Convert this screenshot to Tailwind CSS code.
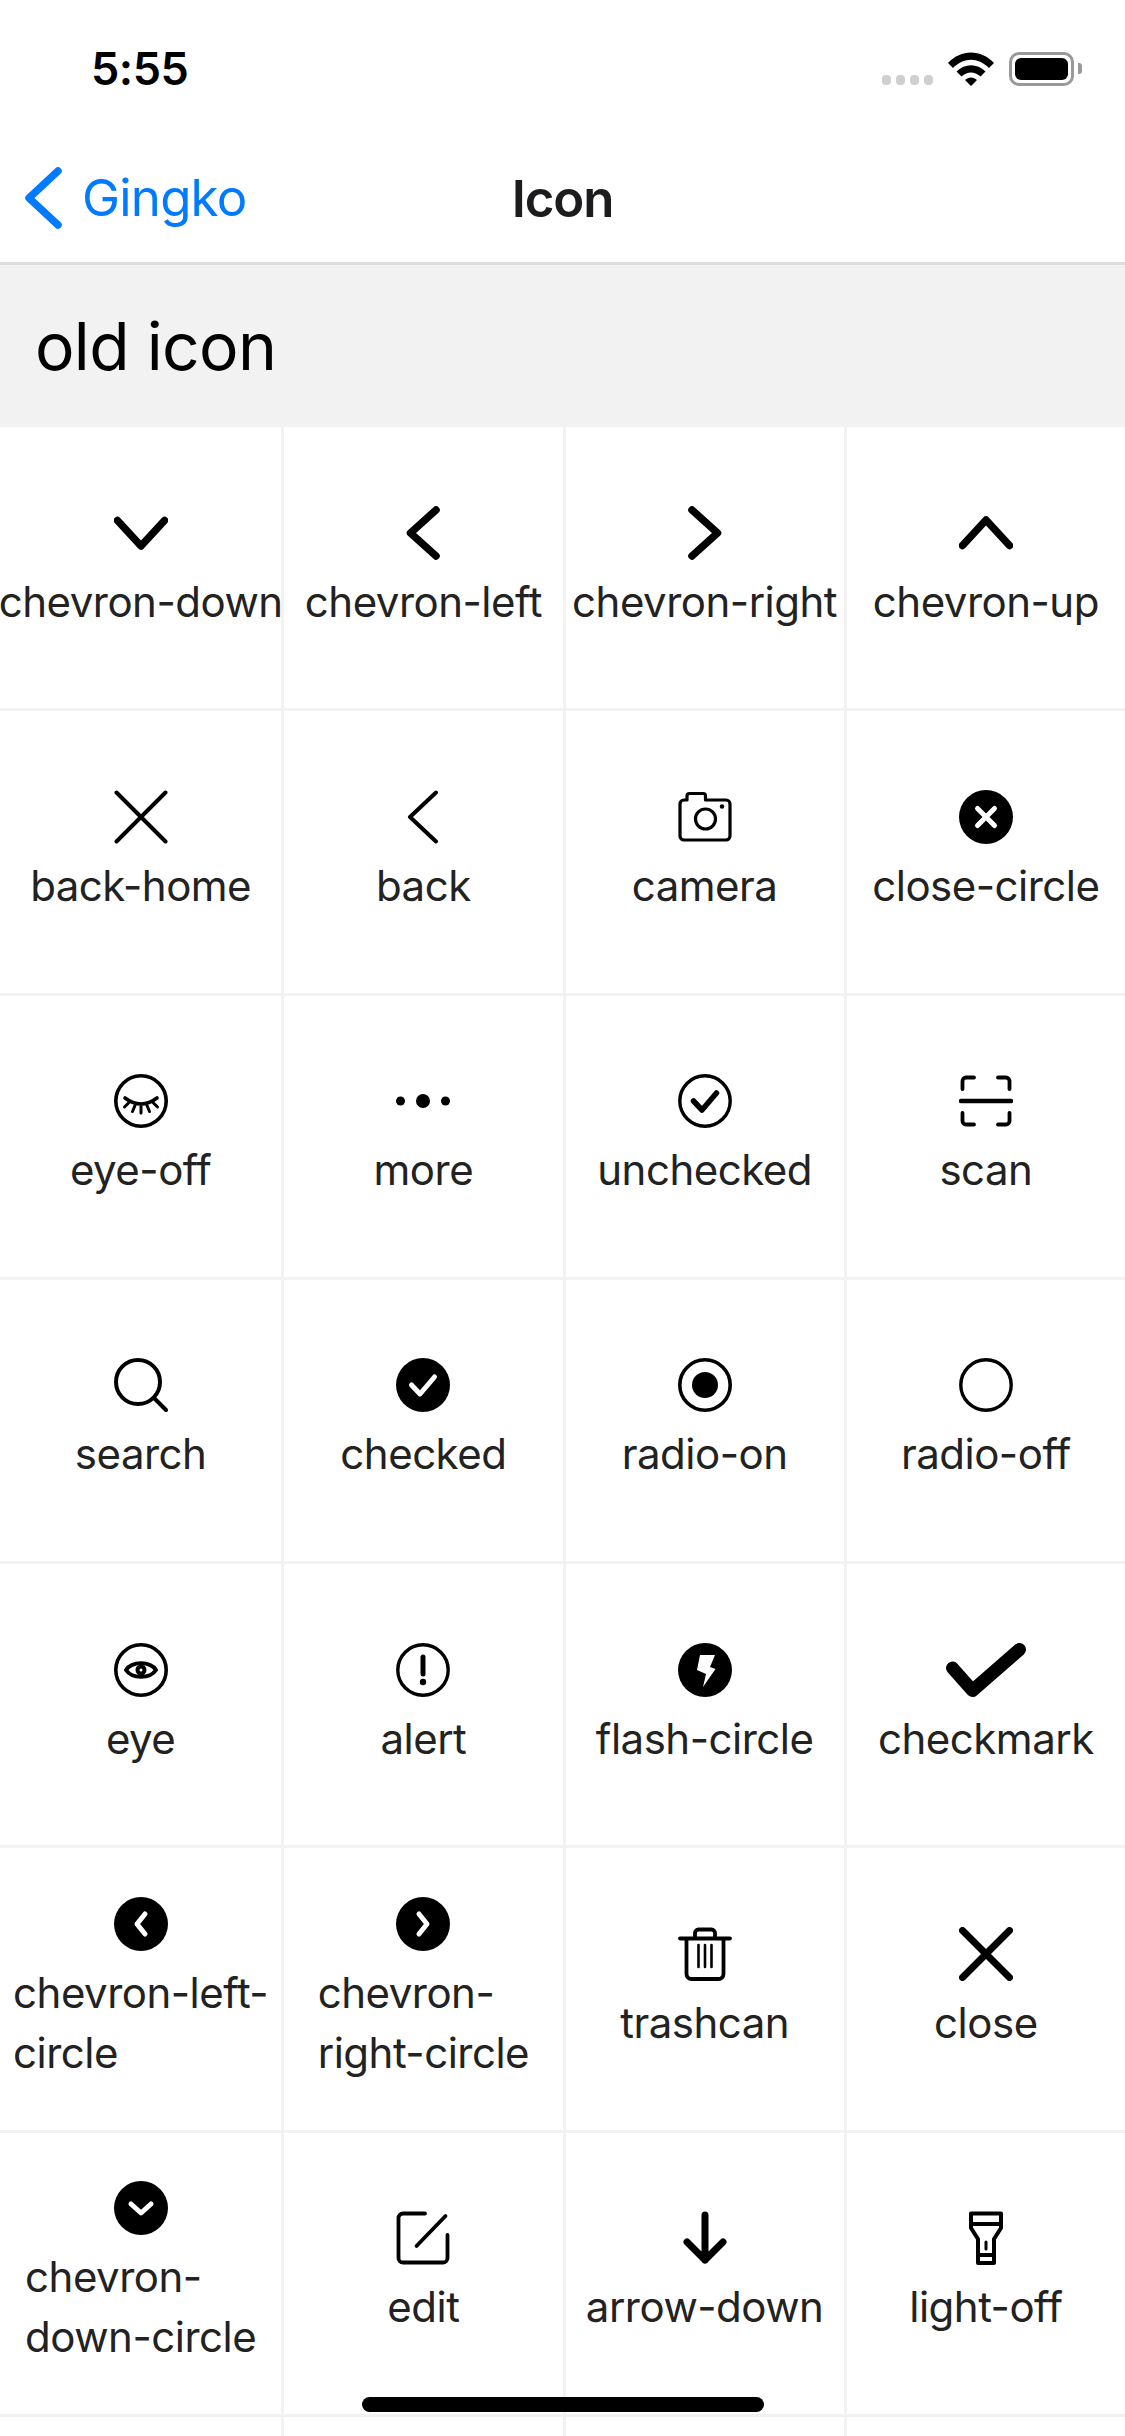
<!DOCTYPE html>
<html lang="en">
<head>
    <meta charset="UTF-8">
    <meta name="viewport" content="width=device-width, initial-scale=1.0">
    <title>Icon</title>
    <script src="https://cdn.jsdelivr.net/npm/@tailwindcss/browser@4"></script>
</head>
<body class="bg-white font-[Inter,sans-serif]">
<div class="relative w-[1125px] h-[2436px] overflow-hidden bg-white">
    <!-- Status bar -->
    <div class="flex items-center justify-between h-[132px] pl-[91px] pr-[43px]">
        <span class="text-[45px] leading-[54px] font-semibold tracking-[-0.5px] text-black mt-[5px]">5:55</span>
        <div class="flex items-center">
            <div class="flex gap-[5px] mt-[28px] mr-[15px]">
                <div class="w-[9px] h-[10px] rounded-[4px] bg-[#cfcfcf]"></div>
                <div class="w-[9px] h-[10px] rounded-[4px] bg-[#cfcfcf]"></div>
                <div class="w-[9px] h-[10px] rounded-[4px] bg-[#cfcfcf]"></div>
                <div class="w-[9px] h-[10px] rounded-[4px] bg-[#cfcfcf]"></div>
            </div>
            <svg class="mt-[5px] mr-[15px]" width="46" height="34" viewBox="0 0 46 34"><path d="M0 11 C13 -3 33 -3 46 11 L41 16 C30 5 16 5 5 16 Z M8.5 19.5 C17 11 29 11 37.5 19.5 L32.5 24.5 C26 19 20 19 13.5 24.5 Z M17 28 C20.5 24.5 25.5 24.5 29 28 L23 34 Z" fill="#000"/></svg>
            <div class="flex items-center mt-[5px]">
                <div class="w-[65px] h-[34px] rounded-[10px] border-[3px] border-[#999999] p-[3px]">
                    <div class="w-full h-full rounded-[6px] bg-black"></div>
                </div>
                <div class="w-[4px] h-[11px] ml-[4px] rounded-r-[3px] bg-[#999999]"></div>
            </div>
        </div>
    </div>

    <!-- Nav bar -->
    <div class="relative flex items-center justify-center h-[133px] border-b-[3px] border-[#dedede]">
        <div class="absolute left-[25px] top-[35px] flex items-center">
            <svg width="37" height="62" viewBox="0 0 37 62"><path d="M33 4 L4 31 L33 58" fill="none" stroke="#007aff" stroke-width="7.5" stroke-linecap="round" stroke-linejoin="round"/></svg>
            <span class="ml-[20px] text-[51px] leading-[60px] tracking-[-0.8px] text-[#007aff]">Gingko</span>
        </div>
        <span class="mt-[3px] text-[51px] leading-[60px] font-semibold tracking-[-1.2px] text-[#1c1c1e]">Icon</span>
    </div>

    <!-- Section header -->
    <div class="flex items-center h-[162px] pl-[35px] bg-[#f2f2f2]">
        <span class="text-[66px] leading-[80px] tracking-[-0.7px] text-black">old icon</span>
    </div>

    <!-- Icon grid -->
    <div class="grid grid-cols-4 text-[42px] leading-[60px] tracking-[-0.5px] text-[#222222]">
        <div class="flex flex-col items-center justify-center gap-[12px] pt-[2px] h-[284.25px] border-b-[3px] border-[#f2f2f2] whitespace-nowrap">
            <svg width="54" height="54" viewBox="0 0 54 54" fill="none" stroke="#000" stroke-linecap="round" stroke-linejoin="round"><path d="M3.5 14.5 L27 40 L50.5 14.5" stroke-width="7.5"/></svg>
            <span>chevron-down</span>
        </div>
        <div class="flex flex-col items-center justify-center gap-[12px] pt-[2px] h-[284.25px] border-b-[3px] border-l-[3px] border-[#f2f2f2] whitespace-nowrap">
            <svg width="54" height="54" viewBox="0 0 54 54" fill="none" stroke="#000" stroke-linecap="round" stroke-linejoin="round"><path d="M40 4 L14.5 27 L40 50" stroke-width="7.5"/></svg>
            <span>chevron-left</span>
        </div>
        <div class="flex flex-col items-center justify-center gap-[12px] pt-[2px] h-[284.25px] border-b-[3px] border-l-[3px] border-[#f2f2f2] whitespace-nowrap">
            <svg width="54" height="54" viewBox="0 0 54 54" fill="none" stroke="#000" stroke-linecap="round" stroke-linejoin="round"><path d="M14 4 L39.5 27 L14 50" stroke-width="7.5"/></svg>
            <span>chevron-right</span>
        </div>
        <div class="flex flex-col items-center justify-center gap-[12px] pt-[2px] h-[284.25px] border-b-[3px] border-l-[3px] border-[#f2f2f2] whitespace-nowrap">
            <svg width="54" height="54" viewBox="0 0 54 54" fill="none" stroke="#000" stroke-linecap="round" stroke-linejoin="round"><path d="M3.5 39.5 L27 14 L50.5 39.5" stroke-width="7.5"/></svg>
            <span>chevron-up</span>
        </div>

        <div class="flex flex-col items-center justify-center gap-[12px] pt-[2px] h-[284.25px] border-b-[3px] border-[#f2f2f2] whitespace-nowrap">
            <svg width="54" height="54" viewBox="0 0 54 54" fill="none" stroke="#000" stroke-linecap="round"><path d="M2.5 2.5 L51.5 51.5 M51.5 2.5 L2.5 51.5" stroke-width="4"/></svg>
            <span>back-home</span>
        </div>
        <div class="flex flex-col items-center justify-center gap-[12px] pt-[2px] h-[284.25px] border-b-[3px] border-l-[3px] border-[#f2f2f2] whitespace-nowrap">
            <svg width="54" height="54" viewBox="0 0 54 54" fill="none" stroke="#000" stroke-linecap="round" stroke-linejoin="round"><path d="M40 2.5 L14 27 L40 51.5" stroke-width="4"/></svg>
            <span>back</span>
        </div>
        <div class="flex flex-col items-center justify-center gap-[12px] pt-[2px] h-[284.25px] border-b-[3px] border-l-[3px] border-[#f2f2f2] whitespace-nowrap">
            <svg width="54" height="54" viewBox="0 0 54 54" fill="none" stroke="#000" stroke-linecap="round" stroke-linejoin="round" stroke-width="3.2"><path d="M9 10 V6 a2.5 2.5 0 0 1 2.5 -2.5 H25 a2.5 2.5 0 0 1 2.5 2.5 V10 H48 a4 4 0 0 1 4 4 V46 a4 4 0 0 1 -4 4 H6 a4 4 0 0 1 -4 -4 V14 a4 4 0 0 1 4 -4 Z"/><circle cx="27.5" cy="29" r="10"/><circle cx="44" cy="16.5" r="2.2" fill="#000" stroke="none"/></svg>
            <span>camera</span>
        </div>
        <div class="flex flex-col items-center justify-center gap-[12px] pt-[2px] h-[284.25px] border-b-[3px] border-l-[3px] border-[#f2f2f2] whitespace-nowrap">
            <svg width="54" height="54" viewBox="0 0 54 54" fill="none" stroke-linecap="round"><circle cx="27" cy="27" r="27" fill="#000"/><path d="M18.5 18.5 L35.5 35.5 M35.5 18.5 L18.5 35.5" stroke="#fff" stroke-width="5"/></svg>
            <span>close-circle</span>
        </div>

        <div class="flex flex-col items-center justify-center gap-[12px] pt-[2px] h-[284.25px] border-b-[3px] border-[#f2f2f2] whitespace-nowrap">
            <svg width="54" height="54" viewBox="0 0 54 54" fill="none" stroke="#000" stroke-linecap="round" stroke-width="3"><circle cx="27" cy="27" r="25.2" stroke-width="3.6"/><path d="M11 24 Q27 36 43 24" stroke-width="3.6"/><path d="M15 28.5 L10.5 33 M21 31.5 L18.5 37.5 M27 32.5 V39 M33 31.5 L35.5 37.5 M39 28.5 L43.5 33"/></svg>
            <span>eye-off</span>
        </div>
        <div class="flex flex-col items-center justify-center gap-[12px] pt-[2px] h-[284.25px] border-b-[3px] border-l-[3px] border-[#f2f2f2] whitespace-nowrap">
            <svg width="54" height="54" viewBox="0 0 54 54"><circle cx="4.5" cy="27" r="4.5"/><circle cx="27" cy="27" r="7"/><circle cx="49.5" cy="27" r="4.5"/></svg>
            <span>more</span>
        </div>
        <div class="flex flex-col items-center justify-center gap-[12px] pt-[2px] h-[284.25px] border-b-[3px] border-l-[3px] border-[#f2f2f2] whitespace-nowrap">
            <svg width="54" height="54" viewBox="0 0 54 54" fill="none" stroke="#000" stroke-linecap="round" stroke-linejoin="round"><circle cx="27" cy="27" r="25.2" stroke-width="3.4"/><path d="M15.5 27 L24 36 L38.5 19" stroke-width="5.5"/></svg>
            <span>unchecked</span>
        </div>
        <div class="flex flex-col items-center justify-center gap-[12px] pt-[2px] h-[284.25px] border-b-[3px] border-l-[3px] border-[#f2f2f2] whitespace-nowrap">
            <svg width="54" height="54" viewBox="0 0 54 54" fill="none" stroke="#000" stroke-linecap="round" stroke-linejoin="round" stroke-width="3.8"><path d="M3.5 15 V7 a3.5 3.5 0 0 1 3.5 -3.5 H15 M39 3.5 H47 a3.5 3.5 0 0 1 3.5 3.5 V15 M3.5 39 V47 a3.5 3.5 0 0 0 3.5 3.5 H15 M39 50.5 H47 a3.5 3.5 0 0 0 3.5 -3.5 V39"/><path d="M2 27 H52" stroke-width="4.5"/></svg>
            <span>scan</span>
        </div>

        <div class="flex flex-col items-center justify-center gap-[12px] pt-[2px] h-[284.25px] border-b-[3px] border-[#f2f2f2] whitespace-nowrap">
            <svg width="54" height="54" viewBox="0 0 54 54" fill="none" stroke="#000" stroke-linecap="round" stroke-width="4"><circle cx="24" cy="24" r="22"/><path d="M40 40 L52 52"/></svg>
            <span>search</span>
        </div>
        <div class="flex flex-col items-center justify-center gap-[12px] pt-[2px] h-[284.25px] border-b-[3px] border-l-[3px] border-[#f2f2f2] whitespace-nowrap">
            <svg width="54" height="54" viewBox="0 0 54 54" fill="none" stroke-linecap="round" stroke-linejoin="round"><circle cx="27" cy="27" r="27" fill="#000"/><path d="M15.5 27 L24 36 L38.5 19" stroke="#fff" stroke-width="5"/></svg>
            <span>checked</span>
        </div>
        <div class="flex flex-col items-center justify-center gap-[12px] pt-[2px] h-[284.25px] border-b-[3px] border-l-[3px] border-[#f2f2f2] whitespace-nowrap">
            <svg width="54" height="54" viewBox="0 0 54 54" fill="none"><circle cx="27" cy="27" r="25.2" stroke="#000" stroke-width="3.6"/><circle cx="27" cy="27" r="13" fill="#000"/></svg>
            <span>radio-on</span>
        </div>
        <div class="flex flex-col items-center justify-center gap-[12px] pt-[2px] h-[284.25px] border-b-[3px] border-l-[3px] border-[#f2f2f2] whitespace-nowrap">
            <svg width="54" height="54" viewBox="0 0 54 54" fill="none"><circle cx="27" cy="27" r="25.2" stroke="#000" stroke-width="3.4"/></svg>
            <span>radio-off</span>
        </div>

        <div class="flex flex-col items-center justify-center gap-[12px] pt-[2px] h-[284.25px] border-b-[3px] border-[#f2f2f2] whitespace-nowrap">
            <svg width="54" height="54" viewBox="0 0 54 54" fill="none" stroke="#000" stroke-linejoin="round"><circle cx="27" cy="27" r="25.2" stroke-width="3.6"/><path d="M12 27 C18 18 36 18 42 27 C36 36 18 36 12 27 Z" stroke-width="4"/><circle cx="27" cy="27" r="3.5" stroke-width="4"/></svg>
            <span>eye</span>
        </div>
        <div class="flex flex-col items-center justify-center gap-[12px] pt-[2px] h-[284.25px] border-b-[3px] border-l-[3px] border-[#f2f2f2] whitespace-nowrap">
            <svg width="54" height="54" viewBox="0 0 54 54" fill="none" stroke="#000" stroke-linecap="round"><circle cx="27" cy="27" r="25.2" stroke-width="3.4"/><path d="M27 14 V31" stroke-width="5"/><circle cx="27" cy="39" r="3.2" fill="#000" stroke="none"/></svg>
            <span>alert</span>
        </div>
        <div class="flex flex-col items-center justify-center gap-[12px] pt-[2px] h-[284.25px] border-b-[3px] border-l-[3px] border-[#f2f2f2] whitespace-nowrap">
            <svg width="54" height="54" viewBox="0 0 54 54"><circle cx="27" cy="27" r="27" fill="#000"/><path d="M22 12 H37 L32 24 L37.5 26 L25 44 L28 31 L19 27 Z" fill="#fff"/></svg>
            <span>flash-circle</span>
        </div>
        <div class="flex flex-col items-center justify-center gap-[12px] pt-[2px] h-[284.25px] border-b-[3px] border-l-[3px] border-[#f2f2f2] whitespace-nowrap">
            <svg width="80" height="54" viewBox="0 0 80 54" fill="none" stroke="#000" stroke-linecap="round" stroke-linejoin="round"><path d="M6.5 25 L26.5 47.5 L73.5 6.5" stroke-width="13"/></svg>
            <span>checkmark</span>
        </div>

        <div class="flex flex-col items-center justify-center gap-[12px] pt-[2px] h-[284.25px] border-b-[3px] border-[#f2f2f2] whitespace-nowrap">
            <svg width="54" height="54" viewBox="0 0 54 54" fill="none" stroke-linecap="round" stroke-linejoin="round"><circle cx="27" cy="27" r="27" fill="#000"/><path d="M31 17 L23 27 L31 37" stroke="#fff" stroke-width="5"/></svg>
            <span>chevron-left-<br>circle</span>
        </div>
        <div class="flex flex-col items-center justify-center gap-[12px] pt-[2px] h-[284.25px] border-b-[3px] border-l-[3px] border-[#f2f2f2] whitespace-nowrap">
            <svg width="54" height="54" viewBox="0 0 54 54" fill="none" stroke-linecap="round" stroke-linejoin="round"><circle cx="27" cy="27" r="27" fill="#000"/><path d="M23 17 L31 27 L23 37" stroke="#fff" stroke-width="5"/></svg>
            <span>chevron-<br>right-circle</span>
        </div>
        <div class="flex flex-col items-center justify-center gap-[12px] pt-[2px] h-[284.25px] border-b-[3px] border-l-[3px] border-[#f2f2f2] whitespace-nowrap">
            <svg width="54" height="54" viewBox="0 0 54 54" fill="none" stroke="#000" stroke-linecap="round" stroke-linejoin="round" stroke-width="3.8"><path d="M2 11.5 H52 M17 11.5 V6 a3.5 3.5 0 0 1 3.5 -3.5 H33.5 a3.5 3.5 0 0 1 3.5 3.5 V11.5 M8.5 11.5 V47 a5 5 0 0 0 5 5 H40.5 a5 5 0 0 0 5 -5 V11.5"/><path d="M20.5 18 V40 M27 18 V40 M33.5 18 V40" stroke-width="2.6"/></svg>
            <span>trashcan</span>
        </div>
        <div class="flex flex-col items-center justify-center gap-[12px] pt-[2px] h-[284.25px] border-b-[3px] border-l-[3px] border-[#f2f2f2] whitespace-nowrap">
            <svg width="54" height="54" viewBox="0 0 54 54" fill="none" stroke="#000" stroke-linecap="round"><path d="M3.5 3.5 L50.5 50.5 M50.5 3.5 L3.5 50.5" stroke-width="7"/></svg>
            <span>close</span>
        </div>

        <div class="flex flex-col items-center justify-center gap-[12px] pt-[2px] h-[284.25px] border-b-[3px] border-[#f2f2f2] whitespace-nowrap">
            <svg width="54" height="54" viewBox="0 0 54 54" fill="none" stroke-linecap="round" stroke-linejoin="round"><circle cx="27" cy="27" r="27" fill="#000"/><path d="M17 23 L27 32 L37 23" stroke="#fff" stroke-width="5"/></svg>
            <span>chevron-<br>down-circle</span>
        </div>
        <div class="flex flex-col items-center justify-center gap-[12px] pt-[2px] h-[284.25px] border-b-[3px] border-l-[3px] border-[#f2f2f2] whitespace-nowrap">
            <svg width="54" height="54" viewBox="0 0 54 54" fill="none" stroke="#000" stroke-linecap="round" stroke-linejoin="round" stroke-width="3.8"><path d="M29 2.5 H7 a4.5 4.5 0 0 0 -4.5 4.5 V47 a4.5 4.5 0 0 0 4.5 4.5 H47 a4.5 4.5 0 0 0 4.5 -4.5 V24"/><path d="M49.5 5 L20.5 35"/></svg>
            <span>edit</span>
        </div>
        <div class="flex flex-col items-center justify-center gap-[12px] pt-[2px] h-[284.25px] border-b-[3px] border-l-[3px] border-[#f2f2f2] whitespace-nowrap">
            <svg width="54" height="54" viewBox="0 0 54 54" fill="none" stroke="#000" stroke-linecap="round" stroke-linejoin="round" stroke-width="7"><path d="M27 4 V49 M9 31 L27 49 L45 31"/></svg>
            <span>arrow-down</span>
        </div>
        <div class="flex flex-col items-center justify-center gap-[12px] pt-[2px] h-[284.25px] border-b-[3px] border-l-[3px] border-[#f2f2f2] whitespace-nowrap">
            <svg width="54" height="54" viewBox="0 0 54 54" fill="none" stroke="#000" stroke-linecap="round" stroke-linejoin="round" stroke-width="4"><path d="M12 2.5 H42 V17 L35 28 V52 H19 V28 L12 17 Z M12 13 H42 M19 44 H35"/><path d="M27 31 V38" stroke-width="3"/></svg>
            <span>light-off</span>
        </div>

        <div class="h-[284.25px] border-b-[3px] border-[#f2f2f2]"></div>
        <div class="h-[284.25px] border-b-[3px] border-l-[3px] border-[#f2f2f2]"></div>
        <div class="h-[284.25px] border-b-[3px] border-l-[3px] border-[#f2f2f2]"></div>
        <div class="h-[284.25px] border-b-[3px] border-l-[3px] border-[#f2f2f2]"></div>
    </div>

    <!-- Home indicator -->
    <div class="absolute left-[362px] top-[2397px] w-[402px] h-[15px] rounded-full bg-black"></div>
</div>
</body>
</html>
